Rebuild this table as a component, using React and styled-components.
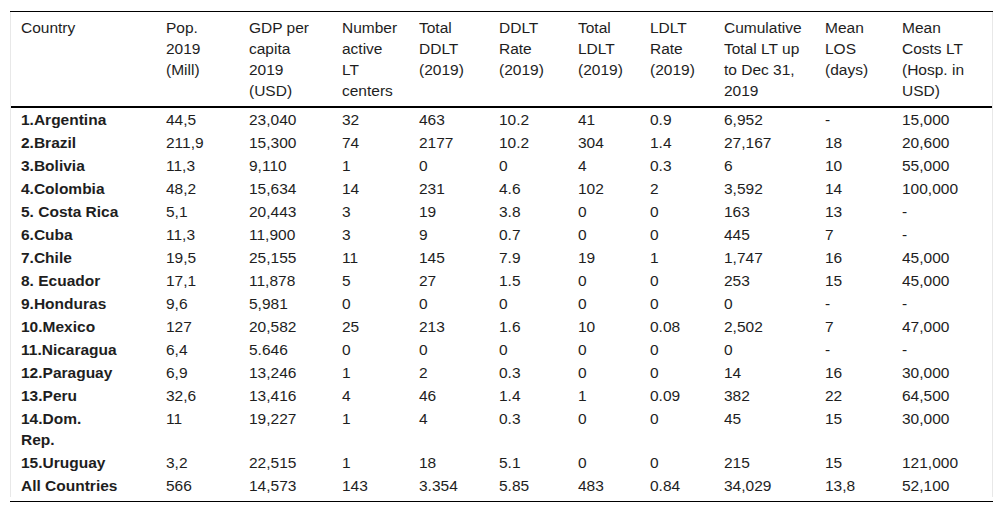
import React from "react";
import styled, { createGlobalStyle } from "styled-components";

const GlobalStyle = createGlobalStyle`
  body {
    margin: 0;
    background: #fff;
    font-family: "Liberation Sans", Arial, sans-serif;
    color: #1e1e1e;
  }
`;

const Page = styled.div`
  padding: 11px 10px 0 10px;
`;

const Frame = styled.div`
  width: 983px;
  border-top: 1px solid #000;
  border-bottom: 1px solid #000;
  padding-bottom: 4px;
`;

const Table = styled.table`
  width: 100%;
  table-layout: fixed;
  border-collapse: separate;
  border-spacing: 0;
  border-left: 1px solid #e8e8e8;
  border-right: 1px solid #e8e8e8;
  font-size: 15.5px;
  line-height: 21px;
`;

const HeadCell = styled.th`
  text-align: left;
  vertical-align: top;
  font-weight: 400;
  padding: 5px 10px;
  border-bottom: 2px solid #000;
`;

const Cell = styled.td`
  text-align: left;
  vertical-align: top;
  padding: 1px 10px;
  font-weight: ${props => (props.$bold ? 700 : 400)};
  white-space: ${props => (props.$bold ? "normal" : "nowrap")};
`;

const widths = [145, 83, 93, 77, 80, 79, 72, 74, 101, 77, 100];

const headers = [
  "Country",
  "Pop. 2019 (Mill)",
  "GDP per capita 2019 (USD)",
  "Number active LT centers",
  "Total DDLT (2019)",
  "DDLT Rate (2019)",
  "Total LDLT (2019)",
  "LDLT Rate (2019)",
  "Cumulative Total LT up to Dec 31, 2019",
  "Mean LOS (days)",
  "Mean Costs LT (Hosp. in USD)"
];

const rows = [
  ["1.Argentina", "44,5", "23,040", "32", "463", "10.2", "41", "0.9", "6,952", "-", "15,000"],
  ["2.Brazil", "211,9", "15,300", "74", "2177", "10.2", "304", "1.4", "27,167", "18", "20,600"],
  ["3.Bolivia", "11,3", "9,110", "1", "0", "0", "4", "0.3", "6", "10", "55,000"],
  ["4.Colombia", "48,2", "15,634", "14", "231", "4.6", "102", "2", "3,592", "14", "100,000"],
  ["5. Costa Rica", "5,1", "20,443", "3", "19", "3.8", "0", "0", "163", "13", "-"],
  ["6.Cuba", "11,3", "11,900", "3", "9", "0.7", "0", "0", "445", "7", "-"],
  ["7.Chile", "19,5", "25,155", "11", "145", "7.9", "19", "1", "1,747", "16", "45,000"],
  ["8. Ecuador", "17,1", "11,878", "5", "27", "1.5", "0", "0", "253", "15", "45,000"],
  ["9.Honduras", "9,6", "5,981", "0", "0", "0", "0", "0", "0", "-", "-"],
  ["10.Mexico", "127", "20,582", "25", "213", "1.6", "10", "0.08", "2,502", "7", "47,000"],
  ["11.Nicaragua", "6,4", "5.646", "0", "0", "0", "0", "0", "0", "-", "-"],
  ["12.Paraguay", "6,9", "13,246", "1", "2", "0.3", "0", "0", "14", "16", "30,000"],
  ["13.Peru", "32,6", "13,416", "4", "46", "1.4", "1", "0.09", "382", "22", "64,500"],
  [["14.Dom.", "Rep."], "11", "19,227", "1", "4", "0.3", "0", "0", "45", "15", "30,000"],
  ["15.Uruguay", "3,2", "22,515", "1", "18", "5.1", "0", "0", "215", "15", "121,000"],
  ["All Countries", "566", "14,573", "143", "3.354", "5.85", "483", "0.84", "34,029", "13,8", "52,100"]
];

const renderCountry = name =>
  Array.isArray(name) ? (
    <>
      {name[0]}
      <br />
      {name[1]}
    </>
  ) : (
    name
  );

const App = () => {
  return (
    <Page>
      <GlobalStyle />
      <Frame>
        <Table>
          <colgroup>
            {widths.map((w, i) => (
              <col key={i} style={{ width: w }} />
            ))}
          </colgroup>
          <thead>
            <tr>
              {headers.map(h => (
                <HeadCell key={h}>{h}</HeadCell>
              ))}
            </tr>
          </thead>
          <tbody>
            {rows.map((row, r) => (
              <tr key={r}>
                {row.map((value, c) => (
                  <Cell key={c} $bold={c === 0}>
                    {c === 0 ? renderCountry(value) : value}
                  </Cell>
                ))}
              </tr>
            ))}
          </tbody>
        </Table>
      </Frame>
    </Page>
  );
};

export default App;
